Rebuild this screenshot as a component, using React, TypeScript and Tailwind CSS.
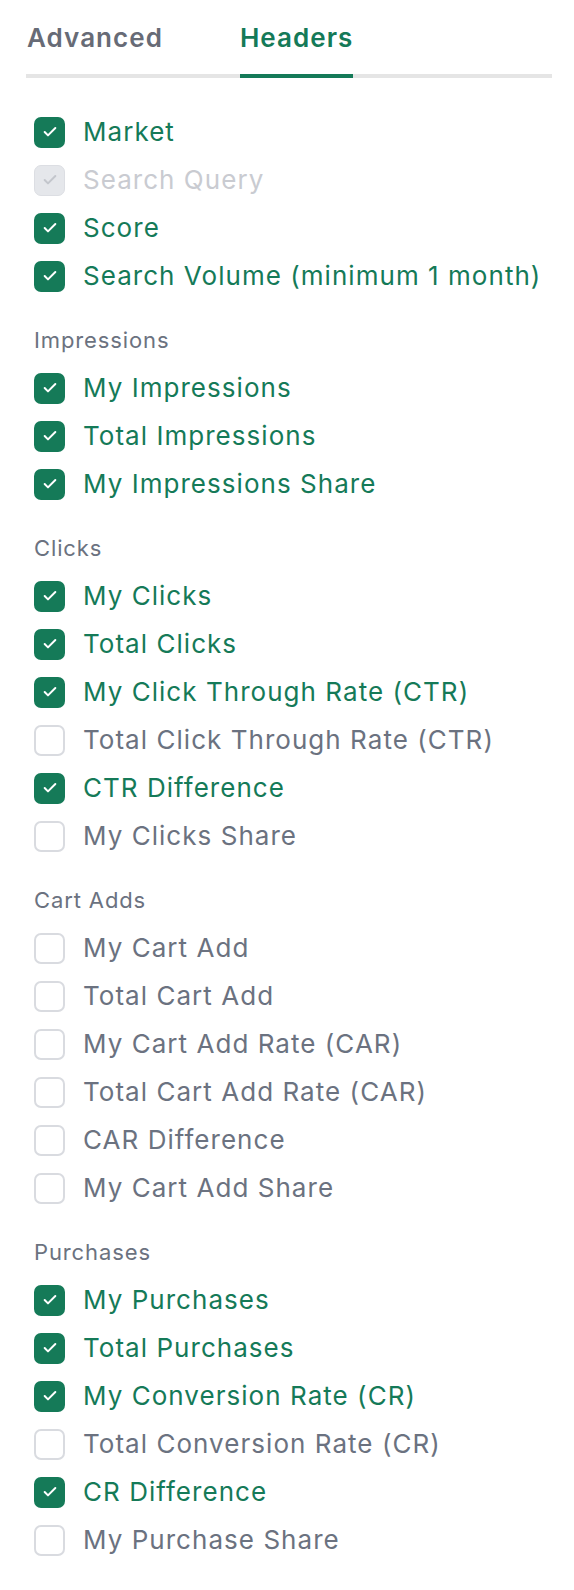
import React from 'react';

type Item = { label: string; checked: boolean; disabled?: boolean };
type Section = { title?: string; items: Item[] };

const sections: Section[] = [
  {
    items: [
      { label: 'Market', checked: true },
      { label: 'Search Query', checked: true, disabled: true },
      { label: 'Score', checked: true },
      { label: 'Search Volume (minimum 1 month)', checked: true },
    ],
  },
  {
    title: 'Impressions',
    items: [
      { label: 'My Impressions', checked: true },
      { label: 'Total Impressions', checked: true },
      { label: 'My Impressions Share', checked: true },
    ],
  },
  {
    title: 'Clicks',
    items: [
      { label: 'My Clicks', checked: true },
      { label: 'Total Clicks', checked: true },
      { label: 'My Click Through Rate (CTR)', checked: true },
      { label: 'Total Click Through Rate (CTR)', checked: false },
      { label: 'CTR Difference', checked: true },
      { label: 'My Clicks Share', checked: false },
    ],
  },
  {
    title: 'Cart Adds',
    items: [
      { label: 'My Cart Add', checked: false },
      { label: 'Total Cart Add', checked: false },
      { label: 'My Cart Add Rate (CAR)', checked: false },
      { label: 'Total Cart Add Rate (CAR)', checked: false },
      { label: 'CAR Difference', checked: false },
      { label: 'My Cart Add Share', checked: false },
    ],
  },
  {
    title: 'Purchases',
    items: [
      { label: 'My Purchases', checked: true },
      { label: 'Total Purchases', checked: true },
      { label: 'My Conversion Rate (CR)', checked: true },
      { label: 'Total Conversion Rate (CR)', checked: false },
      { label: 'CR Difference', checked: true },
      { label: 'My Purchase Share', checked: false },
    ],
  },
];

const CheckIcon = ({ className }: { className: string }) => (
  <svg viewBox="0 0 24 24" fill="none" stroke="currentColor" strokeWidth={3} strokeLinecap="round" strokeLinejoin="round" className={className}>
    <path d="M20 6 9 17l-5-5" />
  </svg>
);

const Row = ({ item }: { item: Item }) => {
  let box = 'bg-white border-2 border-[#d9dbe0]';
  let text = 'text-[#6b7280]';
  if (item.disabled) {
    box = 'bg-[#e5e7eb] border border-[#dcdee3] text-[#c3c6cc]';
    text = 'text-[#c9cbd1]';
  } else if (item.checked) {
    box = 'bg-[#157a58] text-white';
    text = 'text-[#157a58]';
  }
  return (
    <label className="flex h-12 items-center">
      <span className={`ml-2 flex h-[31px] w-[31px] shrink-0 items-center justify-center rounded-[7px] ${box}`}>
        {item.checked && <CheckIcon className="h-4 w-4" />}
      </span>
      <span className={`ml-[18px] text-[26px] leading-8 tracking-[0.04em] whitespace-nowrap ${text}`}>{item.label}</span>
    </label>
  );
};

export default function App() {
  return (
    <div className="min-h-[1590px] bg-white pl-[26px] pr-[22px]" style={{ fontFamily: 'Inter, "Noto Sans", sans-serif' }}>
      <div className="flex gap-[77px] border-b-4 border-[#e5e5e5] pt-[22px] pl-[1px]">
        <button className="-mb-1 pb-6 text-[26px] font-semibold leading-8 tracking-[0.04em] text-[#676b76]">Advanced</button>
        <button className="-mb-1 border-b-4 border-[#157a58] pb-5 text-[26px] font-semibold leading-8 tracking-[0.04em] text-[#157a58]">Headers</button>
      </div>
      <div className="pt-[30px]">
        {sections.map((s, i) => (
          <div key={i} className={s.title ? 'mt-4' : ''}>
            {s.title && (
              <div className="flex h-12 items-center pl-2 text-[22px] tracking-[0.04em] text-[#6b7280]">{s.title}</div>
            )}
            {s.items.map((it) => (
              <Row key={it.label} item={it} />
            ))}
          </div>
        ))}
      </div>
    </div>
  );
}
